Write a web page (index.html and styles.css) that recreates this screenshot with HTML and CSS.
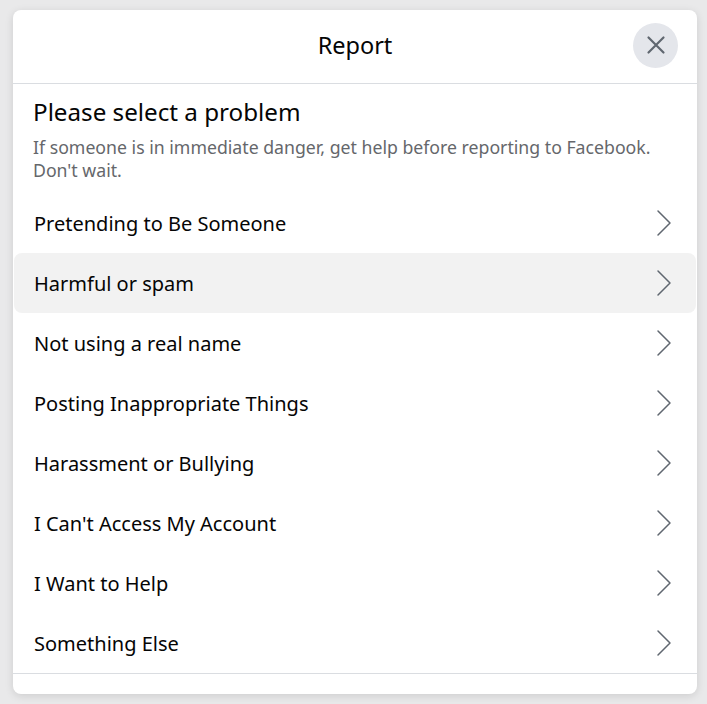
FILE: index.html
```html
<!DOCTYPE html>
<html lang="en">

<head>
    <meta charset="UTF-8">
    <meta name="viewport" content="width=device-width, initial-scale=1.0">
    <title>Report</title>
<link rel="stylesheet" href="styles.css">
</head>

<body>
    <div class="report-dialog">
        <div class="report-header">
            <span></span>
            <h2 class="report-title">Report</h2>
            <a class="report-close" href="#" aria-label="Close">
                <svg width="24" height="24" viewBox="0 0 24 24">
                    <path d="M4.5 4.5 L19.5 19.5 M19.5 4.5 L4.5 19.5" stroke="#606770" stroke-width="2.2" stroke-linecap="round" fill="none"/>
                </svg>
            </a>
        </div>

        <div class="report-body">
            <h3 class="report-heading">Please select a problem</h3>
            <p class="report-note">If someone is in immediate danger, get help before reporting to Facebook. Don't wait.</p>

            <ul class="report-list">
                <li class="report-item">Pretending to Be Someone <span class="report-chevron"></span></li>
                <li class="report-item hover">Harmful or spam <span class="report-chevron"></span></li>
                <li class="report-item">Not using a real name <span class="report-chevron"></span></li>
                <li class="report-item">Posting Inappropriate Things <span class="report-chevron"></span></li>
                <li class="report-item">Harassment or Bullying <span class="report-chevron"></span></li>
                <li class="report-item">I Can't Access My Account <span class="report-chevron"></span></li>
                <li class="report-item">I Want to Help <span class="report-chevron"></span></li>
                <li class="report-item">Something Else <span class="report-chevron"></span></li>
            </ul>
        </div>

        <div class="report-footer"></div>
    </div>

<script>
    // draw the chevrons once, they are all the same
    document.querySelectorAll('.report-chevron').forEach(function(el) {
        el.innerHTML = '<svg width="18" height="28" viewBox="0 0 18 28"><path d="M3 2 L15 14 L3 26" stroke="#606770" stroke-width="1.5" fill="none" stroke-linecap="round" stroke-linejoin="round"/></svg>';
    });
</script>
</body>

</html>
```

FILE: styles.css
```css
body {
  margin: 0;
  padding: 10px 10px 10px 13px;
  background-color: #e9e9ea;
  font-family: "Noto Sans", "Open Sans", sans-serif;
  color: #050505;
}

.report-dialog {
  width: 684px;
  height: 684px;
  background-color: #fff;
  border-radius: 8px;
  box-shadow: 0 2px 8px rgba(0, 0, 0, 0.12);
  display: flex;
  flex-direction: column;
  overflow: hidden;
}

.report-header {
  display: grid;
  grid-template-columns: 1fr auto 1fr;
  align-items: center;
  height: 75px;
  padding-bottom: 3px;
  border-bottom: 1px solid #dadde1;
  box-sizing: border-box;
}

.report-title {
  margin: 0;
  font-size: 23.5px;
  font-weight: 400;
}

.report-close {
  justify-self: end;
  margin-right: 19px;
  width: 45px;
  height: 45px;
  border-radius: 50%;
  background-color: #e4e6eb;
  display: flex;
  align-items: center;
  justify-content: center;
}

.report-body {
  flex: 1;
  padding-top: 12px;
}

.report-heading {
  margin: 0 20px;
  font-size: 24.2px;
  font-weight: 400;
  line-height: 32px;
}

.report-note {
  margin: 8px 40px 0 20px;
  font-size: 17.7px;
  line-height: 23px;
  color: #65676b;
}

.report-list {
  list-style: none;
  margin: 11px 0 0;
  padding: 0;
}

.report-item {
  display: flex;
  align-items: center;
  justify-content: space-between;
  height: 60px;
  padding: 0 23px 0 20px;
  margin: 0 1px;
  border-radius: 8px;
  font-size: 20px;
  cursor: pointer;
}

.report-item.hover,
.report-item:hover {
  background-color: #f2f2f2;
}

.report-chevron {
  display: flex;
}

.report-footer {
  height: 20px;
  border-top: 1px solid #dadde1;
}
```
